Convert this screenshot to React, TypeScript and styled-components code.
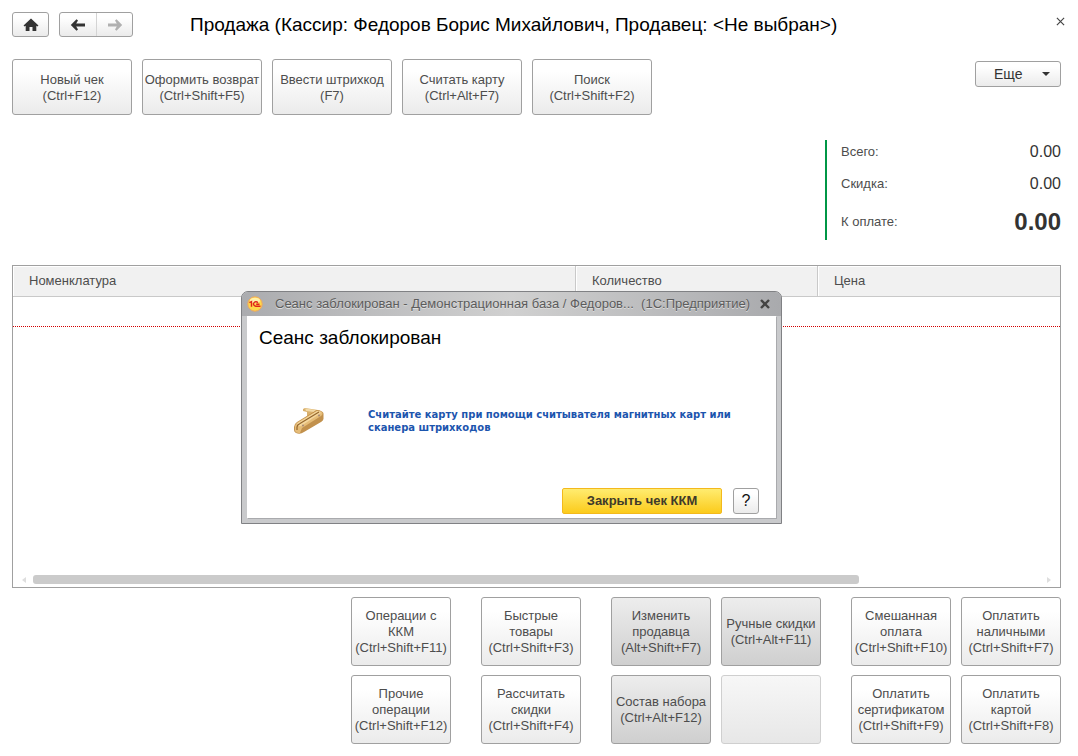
import React from "react";
import styled, { createGlobalStyle, css } from "styled-components";

const GlobalStyle = createGlobalStyle`
  *, *::before, *::after { box-sizing: border-box; }
  body {
    margin: 0;
    background: #fff;
    color: #4d4d4d;
    font: 13px/16px "Liberation Sans", Arial, sans-serif;
  }
  button { font: inherit; color: inherit; }
  svg { flex: none; }
`;

const raised = css`
  border: 1px solid #a0a0a0;
  border-radius: 3px;
  background: linear-gradient(#fff 20%, #ebebeb);
`;

const Page = styled.main`
  position: relative;
  display: flex;
  flex-direction: column;
  min-width: 900px;
  min-height: 100vh;
  padding: 12px 17px 12px 12px;
`;

const Header = styled.header`
  display: flex;
  align-items: flex-start;
  height: 25px;
`;

const NavGroup = styled.div`
  ${raised}
  display: flex;
  height: 25px;
  margin-right: 10px;
`;

const NavButton = styled.button<{ $muted?: boolean }>`
  display: grid;
  place-items: center;
  width: 36px;
  padding: 0;
  border: 0;
  background: none;
  color: ${(p) => (p.$muted ? "#b0b0b0" : "#333")};
  &:only-child { width: 35px; }
  & + & { border-left: 1px solid #d4d4d4; }
`;

const Title = styled.h1`
  flex: 1;
  margin: 0 0 0 47px;
  color: #000;
  font-size: 19px;
  font-weight: 400;
  line-height: 26px;
`;

const CloseButton = styled.button`
  display: grid;
  place-items: center;
  width: 18px;
  height: 18px;
  margin-right: -8px;
  padding: 0;
  border: 0;
  background: none;
`;

const Toolbar = styled.div`
  display: flex;
  gap: 10px;
  margin-top: 22px;
`;

const CommandButton = styled.button<{ $tone?: "pressed" | "blank"; $wide?: boolean }>`
  ${raised}
  width: ${(p) => (p.$wide ? 120 : 100)}px;
  height: ${(p) => (p.$wide ? 56 : 69)}px;
  padding: ${(p) => (p.$wide ? "2px 0 0" : 0)};
  white-space: pre;
  ${(p) => p.$tone === "pressed" && css`background: linear-gradient(#ededed, #cfcfcf);`}
  ${(p) =>
    p.$tone === "blank" &&
    css`
      border-color: #cfcfcf;
      background: linear-gradient(#f7f7f7, #e7e7e7);
    `}
`;

const MoreButton = styled.button`
  ${raised}
  display: flex;
  align-items: center;
  justify-content: space-between;
  width: 86px;
  height: 26px;
  margin: 2px 0 0 auto;
  padding: 0 10px 0 18px;
  color: #333;
  font-size: 14px;
`;

const Totals = styled.dl`
  align-self: flex-end;
  width: 236px;
  height: 100px;
  margin: 25px 0;
  padding-left: 14px;
  border-left: 2px solid #009646;
`;

const TotalRow = styled.div<{ $main?: boolean }>`
  display: flex;
  align-items: center;
  justify-content: space-between;
  height: ${(p) => (p.$main ? 36 : 32)}px;
  padding-bottom: ${(p) => (p.$main ? 0 : 8)}px;
  dd {
    margin: 0;
    color: #333;
    font-size: ${(p) => (p.$main ? 24 : 16)}px;
    font-weight: ${(p) => (p.$main ? 700 : 400)};
  }
`;

const GridPanel = styled.section`
  display: flex;
  flex: 1;
  flex-direction: column;
  min-height: 240px;
  border: 1px solid #a0a0a0;
`;

const Goods = styled.table`
  width: 100%;
  table-layout: fixed;
  border-collapse: separate;
  border-spacing: 0;
  th {
    height: 31px;
    padding: 0 0 0 16px;
    border-bottom: 1px solid #c9c9c9;
    background: #f1f1f1;
    box-shadow: inset 1px 1px #fff;
    font-weight: 400;
    text-align: left;
  }
  th + th { border-left: 1px solid #c9c9c9; }
  td { height: 30px; padding: 0; border-bottom: 1px dotted #d00000; }
`;

const ScrollBar = styled.div`
  display: flex;
  align-items: center;
  gap: 7px;
  margin-top: auto;
  padding: 3px 9px;
`;

const ScrollTrack = styled.div`
  flex: 1;
  height: 9px;
`;

const ScrollThumb = styled.div`
  width: 82%;
  height: 9px;
  border-radius: 3px;
  background: #cbcbcb;
`;

const Footer = styled.footer`
  display: flex;
  justify-content: flex-end;
  gap: 30px;
  margin-top: 9px;
`;

const ButtonGroup = styled.div<{ $columns: number }>`
  display: grid;
  grid-template-columns: repeat(${(p) => p.$columns}, 100px);
  gap: 9px 10px;
`;

const Dialog = styled.section`
  position: absolute;
  top: 291px;
  left: 241px;
  width: 541px;
  border: 1px solid #808184;
  border-radius: 7px 7px 0 0;
  background: #c9cacc;
  overflow: hidden;
`;

const DialogBar = styled.div`
  display: flex;
  align-items: center;
  height: 24px;
  padding: 0 6px 0 5px;
  background: linear-gradient(90deg, #abacaf, #d0d0d0 50%, #a9aaad);
  color: #5c5c5c;
  text-shadow: 0 1px #dedede;
  white-space: pre;
  button {
    display: grid;
    place-items: center;
    width: 20px;
    height: 20px;
    margin-left: auto;
    padding: 0;
    border: 0;
    background: none;
  }
`;

const DialogCaption = styled.span`
  margin-left: 12px;
  font-size: 13px;
`;

const DialogBody = styled.div`
  margin: 0 5px 5px;
  padding: 12px 17px 4px 12px;
  background: #fff;
  box-shadow: 1px 1px #a9aaad;
`;

const DialogTitle = styled.h2`
  margin: 0;
  color: #000;
  font-size: 19px;
  font-weight: 400;
  line-height: 20px;
`;

const Notice = styled.div`
  display: flex;
  align-items: center;
  gap: 42px;
  height: 60px;
  margin: 43px 0 37px 33px;
`;

const NoticeText = styled.p`
  margin: 0;
  color: #1c55ae;
  font: bold 10px/13px "DejaVu Sans", Verdana, sans-serif;
  white-space: pre;
`;

const DialogActions = styled.div`
  display: flex;
  justify-content: flex-end;
  gap: 11px;
`;

const PrimaryButton = styled.button`
  width: 160px;
  height: 26px;
  padding: 0;
  border: 1px solid #f3b91c;
  border-radius: 2px;
  background: linear-gradient(#ffec70, #fbcb1c);
  color: #3f3a2a;
  font-size: 13px;
  font-weight: 700;
`;

const HelpButton = styled.button`
  ${raised}
  width: 26px;
  height: 26px;
  padding: 0;
  color: #111;
  font-size: 16px;
`;

const HomeIcon = () => (
  <svg width="16" height="14" viewBox="0 0 16 14" fill="currentColor">
    <path d="M8 0.5 15.500 7.500 14.300 8.500 13.300 7.800V13H9.500V9H6.500V13H2.700V7.800L1.700 8.500 0.500 7.500Z" />
  </svg>
);

const ArrowIcon = ({ back }: { back?: boolean }) => (
  <svg width="16" height="12" viewBox="0 0 16 12" fill="currentColor">
    <path
      d={
        back
          ? "M0.8 6 6.500 0.300 8 1.500 6.200 4.600H15V7.400H6.200L8 10.500 6.500 11.700Z"
          : "M15.200 6 9.500 0.300 8 1.500 9.800 4.600H1V7.400H9.800L8 10.500 9.500 11.700Z"
      }
    />
  </svg>
);

const CrossIcon = ({ size, weight }: { size: number; weight: number }) => (
  <svg width={size} height={size} viewBox="0 0 10 10" fill="none" stroke="#444" strokeWidth={weight}>
    <path d="M1 1 9 9M9 1 1 9" />
  </svg>
);

const LogoIcon = () => (
  <svg width="16" height="16" viewBox="0 0 16 16">
    <circle cx="8" cy="8" r="7.2" fill="#ffd84a" stroke="#f0a85a" />
    <ellipse cx="8" cy="4.5" rx="5" ry="2.8" fill="#fff0a8" />
    <path
      d="M2.4 6.600 4.500 5.600V10.800M10.900 6.700A2.400 2.200 0 1 0 9 10.200H13.500M9.200 8.200H12.500"
      fill="none"
      stroke="#e0251c"
      strokeWidth="1.400"
    />
  </svg>
);

const CardReaderIcon = () => (
  <svg width="34" height="30" viewBox="0 0 34 30">
    <path d="M11 3 13 2 26 4 24 10 15 12 15 6 11 5Z" fill="#d9b06d" />
    <path d="M13 2.5 24 4 22 6 14 5Z" fill="#f2d9a6" />
    <path d="M2 21Q2 18 5 16L23 5Q26 3 29 5 32 6 31.500 9V13Q31 15 29 16L12 26Q8 29 4 27 2 26 2 24Z" fill="#c2914d" />
    <path d="M3 20Q3 18 6 16L24 5.500Q27 4 30 6 31.500 8 29 10L10 22 8 27Q4 27.500 3 25Z" fill="#e5bc78" />
    <path d="M5 17.500 25 5Q28 5 29 7L9 20Q6 21 5 17.500Z" fill="#f4d79e" />
    <path d="M5 24V21Q5 19 8 17.500L27 6" fill="none" stroke="#94662c" strokeWidth="1.200" />
    <circle cx="27" cy="9.500" r="1" fill="#a58a78" />
    <circle cx="11" cy="19.500" r="1" fill="#a58a78" />
  </svg>
);

const Triangle = ({ path, color = "#dedede", width = 4, height = 6 }: { path: string; color?: string; width?: number; height?: number }) => (
  <svg width={width} height={height} viewBox={`0 0 ${width} ${height}`} fill={color}>
    <path d={path} />
  </svg>
);

type Command = { label: string; tone?: "pressed" | "blank" };

const toolbar: string[] = [
  "Новый чек\n(Ctrl+F12)",
  "Оформить возврат\n(Ctrl+Shift+F5)",
  "Ввести штрихкод\n(F7)",
  "Считать карту\n(Ctrl+Alt+F7)",
  "Поиск\n(Ctrl+Shift+F2)",
];

const footer: Command[][] = [
  [{ label: "Операции с\nККМ\n(Ctrl+Shift+F11)" }, { label: "Прочие\nоперации\n(Ctrl+Shift+F12)" }],
  [{ label: "Быстрые\nтовары\n(Ctrl+Shift+F3)" }, { label: "Рассчитать\nскидки\n(Ctrl+Shift+F4)" }],
  [
    { label: "Изменить\nпродавца\n(Alt+Shift+F7)", tone: "pressed" },
    { label: "Ручные скидки\n(Ctrl+Alt+F11)", tone: "pressed" },
    { label: "Состав набора\n(Ctrl+Alt+F12)", tone: "pressed" },
    { label: "", tone: "blank" },
  ],
  [
    { label: "Смешанная\nоплата\n(Ctrl+Shift+F10)" },
    { label: "Оплатить\nналичными\n(Ctrl+Shift+F7)" },
    { label: "Оплатить\nсертификатом\n(Ctrl+Shift+F9)" },
    { label: "Оплатить\nкартой\n(Ctrl+Shift+F8)" },
  ],
];

export default function App() {
  return (
    <>
      <GlobalStyle />
      <Page>
        <Header>
          <NavGroup>
            <NavButton aria-label="Домой"><HomeIcon /></NavButton>
          </NavGroup>
          <NavGroup>
            <NavButton aria-label="Назад"><ArrowIcon back /></NavButton>
            <NavButton aria-label="Вперед" $muted><ArrowIcon /></NavButton>
          </NavGroup>
          <Title>Продажа (Кассир: Федоров Борис Михайлович, Продавец: &lt;Не выбран&gt;)</Title>
          <CloseButton aria-label="Закрыть"><CrossIcon size={9} weight={1.3} /></CloseButton>
        </Header>

        <Toolbar>
          {toolbar.map((label) => (
            <CommandButton key={label} $wide>{label}</CommandButton>
          ))}
          <MoreButton>
            Еще
            <Triangle path="M0 0H8L4 4Z" color="#333" width={8} height={4} />
          </MoreButton>
        </Toolbar>

        <Totals>
          <TotalRow><dt>Всего:</dt><dd>0.00</dd></TotalRow>
          <TotalRow><dt>Скидка:</dt><dd>0.00</dd></TotalRow>
          <TotalRow $main><dt>К оплате:</dt><dd>0.00</dd></TotalRow>
        </Totals>

        <GridPanel>
          <Goods>
            <colgroup>
              <col width="562" />
              <col width="242" />
              <col />
            </colgroup>
            <thead>
              <tr><th>Номенклатура</th><th>Количество</th><th>Цена</th></tr>
            </thead>
            <tbody>
              <tr><td colSpan={3} /></tr>
            </tbody>
          </Goods>
          <ScrollBar>
            <Triangle path="M4 0V6L0 3Z" />
            <ScrollTrack><ScrollThumb /></ScrollTrack>
            <Triangle path="M0 0V6L4 3Z" />
          </ScrollBar>
        </GridPanel>

        <Footer>
          {footer.map((group, i) => (
            <ButtonGroup key={i} $columns={group.length / 2}>
              {group.map((c) => (
                <CommandButton key={c.label} $tone={c.tone} disabled={c.tone === "blank"}>{c.label}</CommandButton>
              ))}
            </ButtonGroup>
          ))}
        </Footer>

        <Dialog role="dialog" aria-labelledby="lock-title">
          <DialogBar>
            <LogoIcon />
            <DialogCaption>Сеанс заблокирован - Демонстрационная база / Федоров...  (1С:Предприятие)</DialogCaption>
            <button aria-label="Закрыть окно"><CrossIcon size={10} weight={2.4} /></button>
          </DialogBar>
          <DialogBody>
            <DialogTitle id="lock-title">Сеанс заблокирован</DialogTitle>
            <Notice>
              <CardReaderIcon />
              <NoticeText>{"Считайте карту при помощи считывателя магнитных карт или\nсканера штрихкодов"}</NoticeText>
            </Notice>
            <DialogActions>
              <PrimaryButton>Закрыть чек ККМ</PrimaryButton>
              <HelpButton aria-label="Справка">?</HelpButton>
            </DialogActions>
          </DialogBody>
        </Dialog>
      </Page>
    </>
  );
}
